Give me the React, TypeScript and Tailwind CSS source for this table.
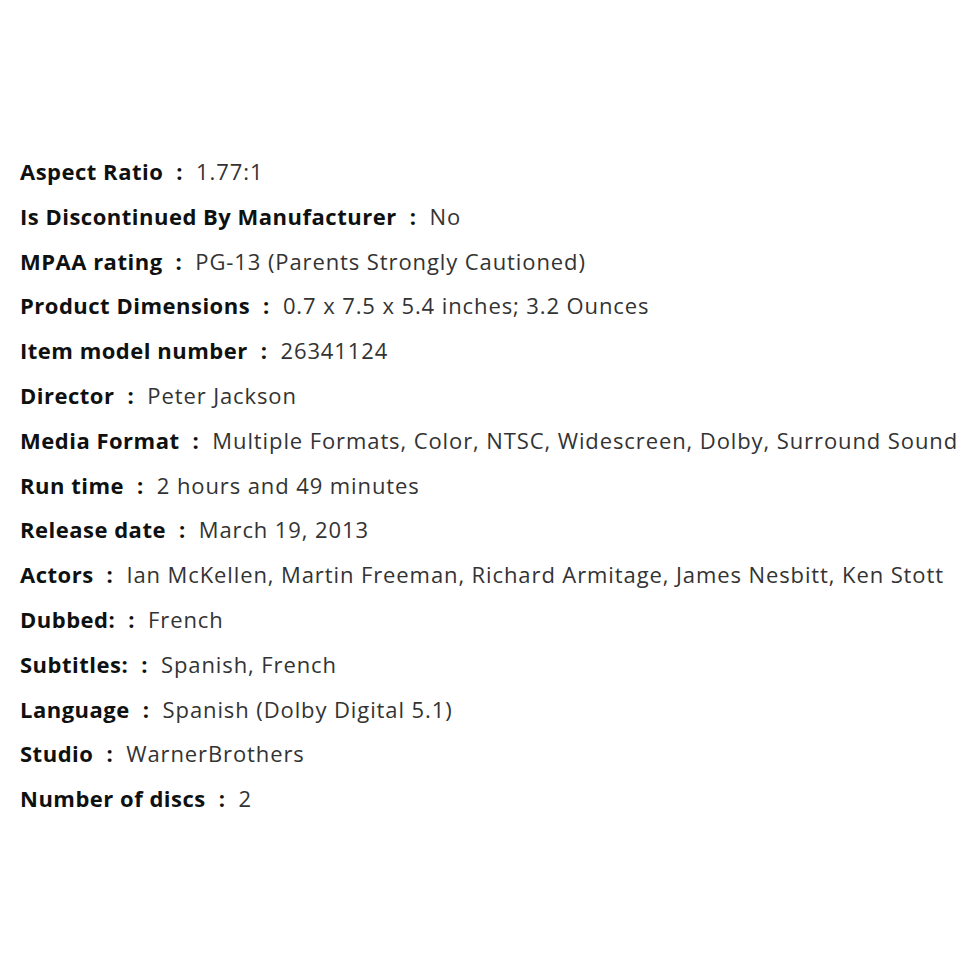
import React from "react";

const details: [string, string][] = [
  ["Aspect Ratio", "1.77:1"],
  ["Is Discontinued By Manufacturer", "No"],
  ["MPAA rating", "PG-13 (Parents Strongly Cautioned)"],
  ["Product Dimensions", "0.7 x 7.5 x 5.4 inches; 3.2 Ounces"],
  ["Item model number", "26341124"],
  ["Director", "Peter Jackson"],
  ["Media Format", "Multiple Formats, Color, NTSC, Widescreen, Dolby, Surround Sound"],
  ["Run time", "2 hours and 49 minutes"],
  ["Release date", "March 19, 2013"],
  ["Actors", "Ian McKellen, Martin Freeman, Richard Armitage, James Nesbitt, Ken Stott"],
  ["Dubbed:", "French"],
  ["Subtitles:", "Spanish, French"],
  ["Language", "Spanish (Dolby Digital 5.1)"],
  ["Studio", "WarnerBrothers"],
  ["Number of discs", "2"],
];

export default function App() {
  return (
    <div
      className="w-[967px] h-[967px] bg-white pt-[149px] pl-[20px] text-[22px] leading-[44.8px] whitespace-nowrap"
      style={{ fontFamily: '"Open Sans", "Noto Sans", sans-serif' }}
    >
      <ul>
        {details.map(([label, value]) => (
          <li key={label}>
            <span className="font-bold text-[#0f1111] tracking-[0.5px]">
              {label}
              <span className="ml-[13px] mr-[13px]">:</span>
            </span>
            <span className="text-[#333333] tracking-[0.9px]">{value}</span>
          </li>
        ))}
      </ul>
    </div>
  );
}
